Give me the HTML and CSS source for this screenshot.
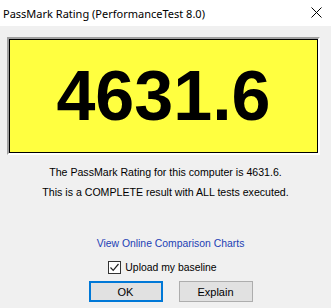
FILE: index.html
```html
<!DOCTYPE html>
<html>
<head>
<link rel="stylesheet" href="styles.css">
</head>
<body>

<div class="window">
  <div class="titlebar">
    <span class="title">PassMark Rating (PerformanceTest 8.0)</span>
    <svg class="close" width="11" height="11" viewBox="0 0 11 11">
      <path d="M0.5 0.5 L10.5 10.5 M10.5 0.5 L0.5 10.5" stroke="#000" stroke-width="1" fill="none"/>
    </svg>
  </div>

  <div class="content">
    <div class="rating-panel">
      <div class="rating-value">4631.6</div>
    </div>

    <p class="info">The PassMark Rating for this computer is 4631.6.</p>
    <p class="info">This is a COMPLETE result with ALL tests executed.</p>

    <div class="link-row">
      <a class="charts-link" href="#">View Online Comparison Charts</a>
    </div>

    <label class="upload">
      <span class="checkbox">
        <svg width="11" height="11" viewBox="0 0 11 11">
          <path d="M1.5 5.5 L4.2 8.3 L9.5 2" stroke="#222" stroke-width="1.2" fill="none"/>
        </svg>
      </span>
      Upload my baseline
    </label>

    <div class="buttons">
      <button type="button" class="btn btn-default">OK</button>
      <button type="button" class="btn">Explain</button>
    </div>
  </div>
</div>

</body>
</html>
```

FILE: styles.css
```css
body {
  margin: 0;
  background-color: #f0f0f0;
  font-family: "Liberation Sans", Arial, sans-serif;
}

.window {
  width: 331px;
  height: 308px;
  background-color: #f0f0f0;
}

.titlebar {
  height: 26px;
  background-color: #fff;
  display: flex;
  align-items: center;
  justify-content: space-between;
  padding: 0 9px 0 3px;
  box-sizing: border-box;
}

.title {
  font-family: "Noto Sans", sans-serif;
  font-size: 11px;
  color: #000;
}

.close {
  display: block;
  margin-top: -1px;
}

.content {
  padding: 11px 11px 0 7px;
}

.rating-panel {
  border: 2px solid;
  border-color: #a0a0a0 #fff #fff #a0a0a0;
}

.rating-value {
  height: 112px;
  border: 1px solid #000;
  background-color: #ffff40;
  display: flex;
  align-items: center;
  justify-content: center;
  font-family: "Liberation Sans", Arial, sans-serif;
  font-weight: bold;
  font-size: 70px;
  color: #000;
}

.info {
  margin: 0;
  text-align: center;
  font-size: 10.6px;
  line-height: 20px;
  color: #000;
  padding-left: 4px;
}

.info:first-of-type {
  margin-top: 7px;
}

.link-row {
  margin-top: 30px;
  text-align: center;
  line-height: 20px;
  padding-left: 14px;
}

.charts-link {
  font-size: 10.4px;
  color: #1c3fb5;
  text-decoration: none;
}

.upload {
  margin-top: 5px;
  height: 16px;
  display: flex;
  align-items: center;
  justify-content: center;
  gap: 4px;
  font-size: 10.4px;
  color: #000;
  padding-right: 2px;
}

.checkbox {
  width: 11px;
  height: 11px;
  border: 1px solid #333;
  background-color: #fff;
  display: flex;
}

.buttons {
  margin-top: 6px;
  display: flex;
  justify-content: center;
  gap: 16px;
  padding-left: 14px;
}

.btn {
  width: 74px;
  height: 21px;
  background-color: #e1e1e1;
  border: 1px solid #adadad;
  font-family: "Liberation Sans", Arial, sans-serif;
  font-size: 11px;
  color: #000;
  padding: 0;
}

.btn-default {
  border: 2px solid #0078d7;
}
```
